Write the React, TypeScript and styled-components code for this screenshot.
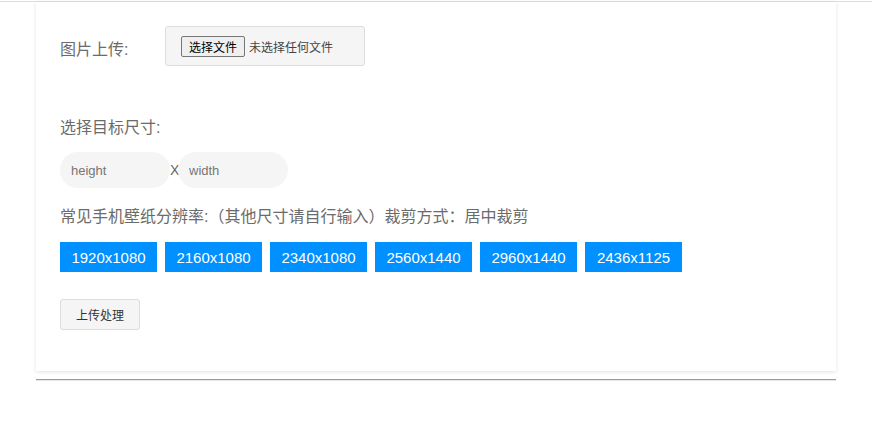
import React, { useState } from 'react'
import styled, { createGlobalStyle } from 'styled-components'

const GlobalStyle = createGlobalStyle`
  body {
    margin: 0;
    background: #fff;
    font-family: "Liberation Sans", "Noto Sans CJK SC", sans-serif;
  }
`

const TopLine = styled.div`
  height: 1px;
  margin-top: 1px;
  background: #dddddd;
`

const Card = styled.div`
  width: 800px;
  margin: 0 auto;
  box-sizing: border-box;
  padding: 24px 24px 41px 24px;
  background: #fff;
  box-shadow: 0 1px 4px rgba(0, 0, 0, 0.12);
`

const Row = styled.div<{ gap?: number; mt?: number }>`
  display: flex;
  align-items: center;
  gap: ${({ gap }) => gap ?? 0}px;
  margin-top: ${({ mt }) => mt ?? 0}px;
`

const Label = styled.div<{ width?: string; mt?: number }>`
  width: ${({ width }) => width ?? 'auto'};
  margin-top: ${({ mt }) => mt ?? 0}px;
  font-size: 16px;
  line-height: 24px;
  color: #6b6b6b;
`

const FileBox = styled.label`
  display: flex;
  align-items: center;
  width: 200px;
  height: 40px;
  box-sizing: border-box;
  padding-left: 15px;
  background: #f5f5f5;
  border: 1px solid #dddddd;
  border-radius: 3px;
  cursor: pointer;
  input {
    display: none;
  }
`

const FileButton = styled.span`
  display: inline-flex;
  align-items: center;
  height: 21px;
  box-sizing: border-box;
  padding: 0 7px;
  background: #efefef;
  border: 1px solid #767676;
  border-radius: 2px;
  font-size: 12px;
  color: #000;
`

const FileName = styled.span`
  margin-left: 4px;
  font-size: 12px;
  color: #444;
`

const SizeInput = styled.input`
  width: 110px;
  height: 36px;
  box-sizing: border-box;
  padding: 0 11px;
  border: none;
  outline: none;
  border-radius: 18px;
  background: #f5f5f5;
  font-family: inherit;
  font-size: 13px;
  color: #333;
  &::placeholder {
    color: #757575;
  }
`

const Times = styled.span`
  width: 8px;
  text-align: center;
  font-size: 14px;
  color: #666;
`

const SizeButton = styled.button`
  width: 97px;
  height: 30px;
  padding: 0;
  border: none;
  background: #0090ff;
  color: #fff;
  font-family: inherit;
  font-size: 15px;
  cursor: pointer;
`

const SubmitButton = styled.button`
  width: 80px;
  height: 31px;
  margin-top: 27px;
  background: #f5f5f5;
  border: 1px solid #dddddd;
  border-radius: 3px;
  font-family: inherit;
  font-size: 12px;
  color: #333;
  cursor: pointer;
`

const Divider = styled.div`
  width: 800px;
  margin: 8px auto 0;
  border-top: 1px solid #9a9a9a;
  border-bottom: 1px solid #e6e6e6;
`

const sizes = ['1920x1080', '2160x1080', '2340x1080', '2560x1440', '2960x1440', '2436x1125']

export default function App() {
  const [height, setHeight] = useState('')
  const [width, setWidth] = useState('')
  const [fileName, setFileName] = useState('')

  const pick = (s: string) => {
    const [w, h] = s.split('x')
    setHeight(h)
    setWidth(w)
  }

  return (
    <>
      <GlobalStyle />
      <TopLine />
      <Card>
        <Row>
          <Label width="105px" mt={8}>图片上传:</Label>
          <FileBox>
            <input type="file" accept="image/*" onChange={(e) => setFileName(e.target.files?.[0]?.name ?? '')} />
            <FileButton>选择文件</FileButton>
            <FileName>{fileName || '未选择任何文件'}</FileName>
          </FileBox>
        </Row>

        <Label mt={50}>选择目标尺寸:</Label>
        <Row mt={12}>
          <SizeInput placeholder="height" value={height} onChange={(e) => setHeight(e.target.value)} />
          <Times>X</Times>
          <SizeInput placeholder="width" value={width} onChange={(e) => setWidth(e.target.value)} />
        </Row>

        <Label mt={17}>常见手机壁纸分辨率:（其他尺寸请自行输入）裁剪方式：居中裁剪</Label>
        <Row gap={8} mt={13}>
          {sizes.map((s) => (
            <SizeButton key={s} onClick={() => pick(s)}>
              {s}
            </SizeButton>
          ))}
        </Row>

        <SubmitButton>上传处理</SubmitButton>
      </Card>
      <Divider />
    </>
  )
}
